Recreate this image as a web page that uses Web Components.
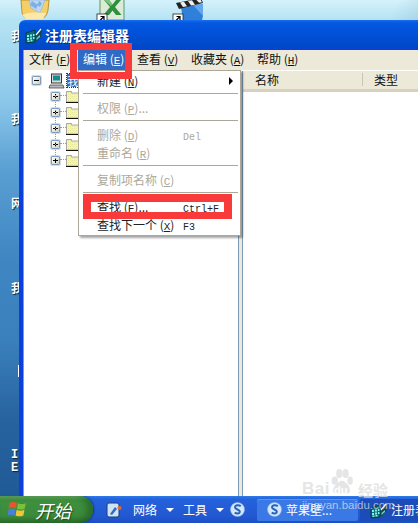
<!DOCTYPE html>
<html lang="zh">
<head>
<meta charset="utf-8">
<title>注册表编辑器</title>
<style>
  html, body { margin: 0; height: 100%; overflow: hidden; }
  body { font: 12px "Noto Sans CJK SC", "Liberation Sans", sans-serif; }
</style>
</head>
<body>
<xp-desktop>
  <xp-window>
    <reg-tree slot="left"></reg-tree>
    <reg-list slot="right"></reg-list>
  </xp-window>
  <xp-taskbar slot="taskbar"></xp-taskbar>
</xp-desktop>

<script>
  const CUBE = `
    <svg width="18" height="18" viewBox="0 0 18 18">
      <path d="M1 7l9-3v12l-9 1z" fill="#0f6f78" stroke="#04323a" stroke-width=".8"/>
      <path d="M2 9h2v2H2zM5 8.500h2v2H5zM2 12h2v2H2zM5 11.500h2v2H5zM8 8h1.500v2H8zM8 11h1.500v2H8zM2.500 14.500h2v1.500h-2zM5.500 14h2v1.600h-2z" fill="#7ef0e6"/>
      <path d="M10 10l5-6 2-1-1 8-6 5z" fill="#16454c"/>
      <path d="M11 9l5-6" stroke="#fff" stroke-width="1.200"/>
      <path d="M11.500 12l3.500-3v2l-3.500 3z" fill="#62d8d0"/>
    </svg>`;

  const SWIRL = size => `
    <svg width="${size}" height="${size}" viewBox="0 0 16 16">
      <circle cx="8" cy="8" r="7.500" fill="#d6e6fa"/>
      <circle cx="8" cy="8" r="7.500" fill="none" stroke="#86aee6" stroke-width=".6"/>
      <path d="M11.500 4.500C9 2.500 5 3.500 5.500 6c.4 2 5 2 5 4.300 0 2-3 2.600-5.500 1" fill="none" stroke="#2763bd" stroke-width="2.200"/>
    </svg>`;

  // little shortcut arrow that sits on the desktop icons
  const SHORTCUT = `
    <rect x="0" y="0" width="10" height="8" fill="#fff" stroke="#222" stroke-width=".8"/>
    <path d="M2.500 7l4-4M3.500 2.500H7V6" stroke="#000" stroke-width="1.200" fill="none"/>`;

  class XpDesktop extends HTMLElement {
    constructor() {
      super();
      this.attachShadow({ mode: 'open' });
      this.shadowRoot.innerHTML = `
        <style>
          :host {
            display: flex;
            flex-direction: column;
            width: 418px;
            height: 523px;
            position: relative;
            overflow: hidden;
            background:
              linear-gradient(115deg, transparent 60%, rgba(18,70,130,.3) 75%, transparent 90%),
              linear-gradient(180deg, #d4f2fb 0, #b5e3f3 20px, #8cc8ea 100px, #5a9fd3 170px, #3f86c2 260px, #3a80bc 340px, #27639f 420px, #1f5a96 500px);
          }
          .canvas { flex: 1; position: relative; min-height: 0; }
          .icon { position: absolute; top: 0; overflow: visible; }
          .label {
            position: absolute; left: 11px; color: #fff; font-size: 12px; line-height: 13px;
            text-shadow: 1px 1px 1px #123; font-weight: 700; white-space: nowrap;
          }
          .mono { font: 700 12px/12.500px "Liberation Mono", monospace; }
          .tick { position: absolute; left: 18px; top: 365px; width: 1px; height: 12px; background: #fff; }
          .win { position: absolute; left: 19px; top: 20px; right: 0; bottom: 0; }
          .mark {
            position: absolute; left: 295px; top: 462px; width: 100px; height: 52px; z-index: 5;
            color: rgba(222,222,222,.8); pointer-events: none; white-space: nowrap;
          }
          .mark span { position: absolute; }
          .bai { left: 7px; top: 17px; font: 700 17px/20px "Liberation Sans", sans-serif; letter-spacing: .5px; }
          .du { left: 39px; top: 21px; font: 700 11px/14px "Liberation Sans", sans-serif; color: rgba(255,255,255,.95); }
          .jy { left: 63px; top: 18px; font: 700 15px/20px "Noto Sans CJK SC", sans-serif; }
          .url { left: 7px; top: 36px; font: 11.500px/14px "Liberation Sans", sans-serif; color: rgba(230,230,230,.7); }
          .paw { position: absolute; left: 35px; top: 6px; }
        </style>
        <div class="canvas">
          <svg class="icon" style="left:20px" width="30" height="20" viewBox="0 0 30 20">
            <path d="M1 0l1 12c.3 3 2 6 5 6h15c3 0 5-3 6-8l1-10z" fill="#f4cf68" stroke="#b9903a"/>
            <path d="M9 0h16l-5 13-9-5z" fill="#bcd8f4" stroke="#8fb0d6" stroke-width=".6"/>
            <path d="M12 1l6 4-2 4-6-4zM19 1l3 2-2 4-3-2z" fill="#7fb0e4"/>
            <path d="M2 15c6-3 14-3 24-2l-3 6H6z" fill="#fbe9ac"/>
          </svg>
          <svg class="icon" style="left:97px" width="29" height="22" viewBox="0 0 29 22">
            <rect x="3" y="-2" width="24" height="22" fill="#dcebd8" stroke="#3f7f48" stroke-width=".8"/>
            <path d="M7 0h5l3.500 4.500L19 0h5l-6 7 6.500 8h-5.500l-3.500-4.500L12 15H6.500L13 7z" fill="#2f8f3e"/>
            <path d="M7 0h5l3.500 4.500L14 6z" fill="#7cc47c"/>
            <g transform="translate(0 14)">${SHORTCUT}</g>
          </svg>
          <svg class="icon" style="left:173px" width="32" height="22" viewBox="0 0 32 22">
            <path d="M8 7L30 4v12l-1 4H10z" fill="#2f80d8"/>
            <path d="M20 5l10-1v12z" fill="#62a8ee"/>
            <path d="M3 3L28-2l2 5L6 9z" fill="#222"/>
            <path d="M7 2.500l4-.8 3 4.500-4 .8zM15 1l4-.8 3 4.500-4 .8zM23-.5l4-.8 2 3.500-3 .6z" fill="#eee"/>
            <g transform="translate(0 14)">${SHORTCUT}</g>
          </svg>
          <span class="label" style="top:29px">我</span>
          <span class="label" style="top:112px">我</span>
          <span class="label" style="top:196px">网</span>
          <span class="label" style="top:281px">我</span>
          <span class="tick"></span>
          <span class="label mono" style="top:449px">Ir<br>E:</span>
          <div class="win"><slot></slot></div>
        </div>
        <slot name="taskbar"></slot>
        <div class="mark">
          <svg class="paw" width="24" height="28" viewBox="0 0 24 31">
            <g fill="rgba(222,222,222,.8)">
              <ellipse cx="4" cy="14" rx="3.500" ry="4.500"/>
              <ellipse cx="9" cy="6" rx="3.500" ry="5"/>
              <ellipse cx="16" cy="6" rx="3.500" ry="5"/>
              <ellipse cx="21" cy="14" rx="3" ry="4.500"/>
              <path d="M12 14c4 0 10 8 9 12-1 3-6 3-9 2-3 1-9 1-10-2-1-4 6-12 10-12z"/>
            </g>
          </svg>
          <span class="bai">Bai</span>
          <span class="du">du</span>
          <span class="jy">经验</span>
          <span class="url">jingyan.baidu.com</span>
        </div>
      `;
    }
  }

  class XpWindow extends HTMLElement {
    constructor() {
      super();
      this.attachShadow({ mode: 'open' });
      this.shadowRoot.innerHTML = `
        <style>
          :host {
            display: flex;
            flex-direction: column;
            height: 100%;
            border-radius: 6px 0 0 0;
            background: linear-gradient(180deg, #1a6cf0 0, #0458e0 3px, #0152da 12px, #0048c8 26px, #0a40d8 30px, #0c3fdc 100%);
            position: relative;
            box-sizing: border-box;
            padding-left: 4px;
          }
          .title {
            height: 30px; flex: none; display: flex; align-items: center; gap: 2px; padding-left: 2px;
            color: #fff; font-weight: 700; font-size: 14px; line-height: 14px; text-shadow: 1px 1px 0 #0a2a80;
          }
          .inner { flex: 1; min-height: 0; display: flex; flex-direction: column; background: #ece9d8; border-left: 1px solid #7f9db9; }
          .bar { height: 20px; flex: none; display: flex; align-items: center; background: #ece9d8; color: #111; }
          .item { width: 48px; margin-right: 6px; box-sizing: border-box; padding-left: 5px; white-space: nowrap; line-height: 20px; }
          .item.wide { width: 60px; }
          .item.on { background: #316ac5; color: #fff; }
          u { text-decoration: underline; text-underline-offset: 1px; font-family: "Liberation Mono", monospace; font-size: 11px; }
          .body { flex: 1; min-height: 0; display: flex; border-top: 1px solid #fff; }
          .left { width: 214px; flex: none; background: #fff; border-right: 1px solid #7f9db9; }
          .split { width: 3px; flex: none; background: #ece9d8; }
          .right { flex: 1; background: #fff; border-left: 1px solid #7f9db9; min-width: 0; }
          .mark { position: absolute; border: 7px solid #f93a3a; box-sizing: border-box; z-index: 3; }
          reg-menu { position: absolute; left: 59px; top: 50px; z-index: 2; }
        </style>
        <div class="title">${CUBE}<span>注册表编辑器</span></div>
        <div class="inner">
          <div class="bar">
            <span class="item">文件 (<u>F</u>)</span>
            <span class="item on">编辑 (<u>E</u>)</span>
            <span class="item">查看 (<u>V</u>)</span>
            <span class="item wide">收藏夹 (<u>A</u>)</span>
            <span class="item">帮助 (<u>H</u>)</span>
          </div>
          <div class="body">
            <div class="left"><slot name="left"></slot></div>
            <div class="split"></div>
            <div class="right"><slot name="right"></slot></div>
          </div>
        </div>
        <reg-menu></reg-menu>
        <div class="mark" style="left:51px;top:23px;width:62px;height:36px"></div>
        <div class="mark" style="left:64px;top:174px;width:149px;height:25px;border-width:8px 8px 7px"></div>
      `;
    }
  }

  class RegMenu extends HTMLElement {
    constructor() {
      super();
      this.attachShadow({ mode: 'open' });
      const rows = [
        ['新建 (<u>N</u>)', '', 0, 'arrow'], 'sep',
        ['权限 (<u>P</u>)...', '', 1], 'sep',
        ['删除 (<u>D</u>)', 'Del', 1],
        ['重命名 (<u>R</u>)', '', 1], 'sep',
        ['复制项名称 (<u>C</u>)', '', 1], 'sep',
        ['查找 (<u>F</u>)...', 'Ctrl+F', 0],
        ['查找下一个 (<u>X</u>)', 'F3', 0],
      ];
      const html = rows.map(r => {
        if (r === 'sep') return '<div class="sep"></div>';
        const [label, key, off, arrow] = r;
        return `<div class="row${off ? ' off' : ''}">
          <span class="lab">${label}</span><span class="key">${key}</span>
          ${arrow ? '<span class="arrow"></span>' : ''}
        </div>`;
      }).join('');
      this.shadowRoot.innerHTML = `
        <style>
          :host {
            display: block; width: 163px; box-sizing: border-box; padding: 1px 2px;
            background: #fff; border: 1px solid #aca899; box-shadow: 2px 2px 2px rgba(0,0,0,.35);
            color: #222;
          }
          .row { height: 18px; line-height: 18px; display: flex; align-items: baseline; padding-left: 16px; position: relative; white-space: nowrap; }
          .lab { width: 86px; flex: none; }
          .key { font: 10px/18px "Liberation Mono", monospace; }
          .off { color: #aca899; }
          u { text-decoration: underline; text-underline-offset: 1px; font-family: "Liberation Mono", monospace; font-size: 11px; }
          .sep { height: 1px; background: #aca899; margin: 3px 0 5px 2px; }
          .arrow {
            position: absolute; right: 5px; top: 5px; width: 0; height: 0;
            border-left: 4px solid #000; border-top: 4px solid transparent; border-bottom: 4px solid transparent;
          }
        </style>
        ${html}
      `;
    }
  }

  class RegTree extends HTMLElement {
    constructor() {
      super();
      this.attachShadow({ mode: 'open' });
      const folder = `
        <svg width="13" height="13" viewBox="0 0 13 13">
          <defs>
            <pattern id="dith" width="2" height="2" patternUnits="userSpaceOnUse">
              <rect width="2" height="2" fill="#ffff60"/>
              <rect width="1" height="1" fill="#e8e8a0"/>
            </pattern>
          </defs>
          <path d="M.5 12V1.500h5V3h7v9z" fill="url(#dith)" stroke="#a8a8a0"/>
          <path d="M0 12h13v1H0z" fill="#111"/>
        </svg>`;
      const box = s => `<span class="box">
          <svg width="7" height="7" viewBox="0 0 7 7"><path d="${s}" stroke="#000" stroke-width="1"/></svg>
        </span>`;
      const rows = Array(5).fill(`<div class="row sub">${box('M1 3.500h5M3.500 1v5')}<i class="dots"></i>${folder}</div>`).join('');
      this.shadowRoot.innerHTML = `
        <style>
          :host { display: block; padding: 2px 0 0 8px; height: 100%; box-sizing: border-box; position: relative; }
          .row { height: 16px; display: flex; align-items: center; }
          .row.top { height: 15px; }
          .sub { padding-left: 19px; }
          .box {
            width: 9px; height: 9px; box-sizing: border-box; border: 1px solid #7f9db9; border-radius: 1px;
            background: linear-gradient(135deg, #fff, #d2cebc); flex: none; display: flex;
            outline: 1px solid rgba(127,157,185,.35);
          }
          .box svg { display: block; }
          .dots { width: 6px; height: 1px; flex: none; border-top: 1px dotted #999; }
          .pc { margin-left: 7px; }
          .sel { width: 12px; height: 13px; background: #316ac5; outline: 1px dotted #333; margin-left: 2px; color: #fff; font-size: 12px; line-height: 13px; overflow: hidden; }
          .stem { position: absolute; left: 31px; top: 24px; height: 64px; border-left: 1px dotted #999; }
        </style>
        <div class="row top">
          ${box('M1 3.500h5')}
          <svg class="pc" width="17" height="16" viewBox="0 0 17 16">
            <rect x="3.500" y="1" width="10" height="9" fill="#ddd" stroke="#333"/>
            <rect x="5" y="2.500" width="7" height="5" fill="#0f8f8f"/>
            <path d="M2 12h13l1 3H1z" fill="#bbb" stroke="#333" stroke-width=".7"/>
          </svg>
          <span class="sel">我</span>
        </div>
        <div class="stem"></div>
        ${rows}
      `;
    }
  }

  class RegList extends HTMLElement {
    constructor() {
      super();
      this.attachShadow({ mode: 'open' });
      this.shadowRoot.innerHTML = `
        <style>
          :host { display: block; }
          .head { height: 21px; padding-bottom: 1px; display: flex; align-items: center; background: #ece9d8; border-bottom: 3px solid #d6d2c0; color: #111; box-sizing: border-box; }
          .a { width: 120px; padding-left: 12px; box-sizing: border-box; border-right: 1px solid #c9c6b5; line-height: 13px; }
          .b { padding-left: 11px; }
        </style>
        <div class="head"><span class="a">名称</span><span class="b">类型</span></div>
      `;
    }
  }

  class XpTaskbar extends HTMLElement {
    constructor() {
      super();
      this.attachShadow({ mode: 'open' });
      this.shadowRoot.innerHTML = `
        <style>
          :host {
            display: flex; flex: none; height: 27px; align-items: center; color: #fff;
            background: linear-gradient(180deg, #2f7be8 0, #2462dc 3px, #2258d2 20px, #1c4fc4 27px);
            white-space: nowrap; overflow: hidden;
          }
          .start {
            width: 93px; height: 27px; flex: none; box-sizing: border-box; display: flex; align-items: center; gap: 7px; padding-left: 8px;
            background: linear-gradient(180deg, #67ad66 0, #3f9140 15%, #3a8a3b 75%, #2d6f2e 100%);
            border-radius: 0 13px 13px 0; box-shadow: 1px 0 2px #123a80, inset -6px 0 6px rgba(20,70,20,.45);
            font: italic 18px "Noto Sans CJK SC", sans-serif; text-shadow: 1px 1px 1px #1c4c1c;
          }
          .quick { margin-left: 13px; display: flex; }
          .t { font-size: 12px; }
          .tri { width: 0; height: 0; border: 4px solid transparent; border-top: 4px solid #fff; border-bottom: 0; margin: 0 9px; }
          .s { display: flex; margin-right: 12px; margin-left: -3px; }
          .btn {
            height: 22px; box-sizing: border-box; display: flex; align-items: center; gap: 4px; padding-left: 10px; flex: none;
            font-size: 12px;
          }
          .b1 { width: 101px; background: #3a78e6; border-radius: 2px; box-shadow: inset 0 1px 0 #5a94f0; }
          .b2 { margin-left: 2px; background: #1c4cb8; border-radius: 2px 0 0 2px; width: 100px; gap: 3px; }
        </style>
        <div class="start">
          <svg width="20" height="19" viewBox="0 0 17 17">
            <path d="M1 2.500c2-1 4-1 6.500 0l-1 5c-2-1-4-1-6.500 0z" fill="#e8552c"/>
            <path d="M8.500 2.800c2.500 1 4.500 1 7 0l-1 5c-2.500 1-4.500 1-7 0z" fill="#7cbf3a"/>
            <path d="M0 8.500c2-1 4-1 6.300 0l-1 5.500c-2-1-4-1-6 0z" fill="#4a80dc"/>
            <path d="M7.300 8.800c2.500 1 4.500 1 7 0l-1 5c-2.500 1-4.500 1-7 0z" fill="#f2c631"/>
          </svg>
          <span>开始</span>
        </div>
        <span class="quick">
          <svg width="16" height="16" viewBox="0 0 16 16">
            <rect x="1" y="1" width="12" height="14" rx="2" fill="#cfe3f6" stroke="#1c3d80"/>
            <path d="M4 12l5-7 2 2-5 6z" fill="#2f6cc0"/>
            <circle cx="13.500" cy="6" r="2" fill="#e8682c"/>
          </svg>
        </span>
        <span class="t" style="margin-left:11px">网络</span><span class="tri"></span>
        <span class="t">工具</span><span class="tri"></span>
        <span class="s">${SWIRL(15)}</span>
        <span class="btn b1">${SWIRL(15)}<span>苹果壁...</span></span>
        <span class="btn b2">${CUBE}<span>注册表</span></span>
      `;
    }
  }

  customElements.define('xp-desktop', XpDesktop);
  customElements.define('xp-window', XpWindow);
  customElements.define('reg-menu', RegMenu);
  customElements.define('reg-tree', RegTree);
  customElements.define('reg-list', RegList);
  customElements.define('xp-taskbar', XpTaskbar);
</script>
</body>
</html>
